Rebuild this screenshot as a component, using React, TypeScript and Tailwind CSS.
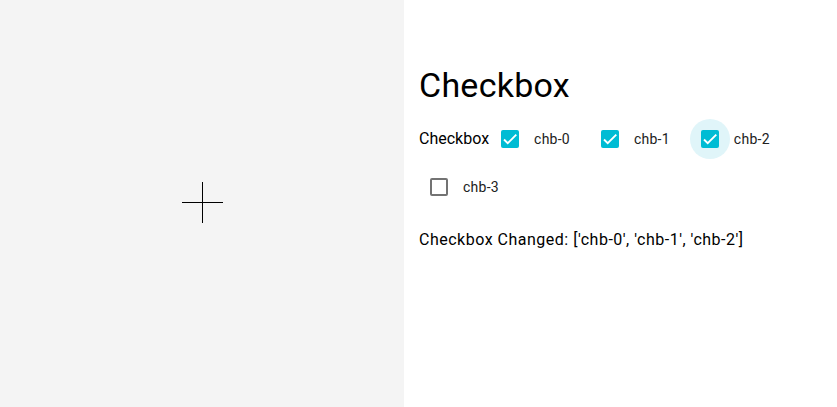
import { useState } from "react";

const items = ["chb-0", "chb-1", "chb-2", "chb-3"];

function Check({
  label,
  checked,
  hovered,
  onToggle,
}: {
  label: string;
  checked: boolean;
  hovered?: boolean;
  onToggle: () => void;
}) {
  return (
    <label className="mr-5 inline-flex cursor-pointer items-center">
      <span
        className={`flex h-10 w-10 items-center justify-center rounded-full ${
          hovered ? "bg-[#e0f5f9]" : ""
        }`}
        onClick={onToggle}
      >
        {checked ? (
          <span className="flex h-[18px] w-[18px] items-center justify-center rounded-[2px] bg-[#00bcd4]">
            <svg viewBox="0 0 24 24" className="h-[14px] w-[14px]">
              <path
                d="M1.73 12.91 8.1 19.28 22.79 4.59"
                fill="none"
                stroke="white"
                strokeWidth="3.2"
              />
            </svg>
          </span>
        ) : (
          <span className="h-[18px] w-[18px] rounded-[2px] border-2 border-[#737373]" />
        )}
      </span>
      <span className="pl-1 text-sm tracking-[0.25px] text-[#212121]">{label}</span>
    </label>
  );
}

export default function App() {
  const [checked, setChecked] = useState<string[]>(["chb-0", "chb-1", "chb-2"]);

  const toggle = (name: string) =>
    setChecked((prev) =>
      prev.includes(name) ? prev.filter((n) => n !== name) : items.filter((i) => i === name || prev.includes(i))
    );

  return (
    <div className="flex h-[407px] w-full font-['Roboto',sans-serif] text-black">
      <div className="flex w-[404px] shrink-0 items-center justify-center bg-[#f4f4f4] pb-[2px]">
        <svg width="41" height="41" viewBox="0 0 41 41">
          <line x1="0" y1="20.5" x2="41" y2="20.5" stroke="black" strokeWidth="1" />
          <line x1="20.5" y1="0" x2="20.5" y2="41" stroke="black" strokeWidth="1" />
        </svg>
      </div>
      <div className="flex-1 bg-white px-[15px] pt-[65px]">
        <h1 className="text-[34px] leading-[40px] tracking-[0.25px]">Checkbox</h1>
        <div className="mt-[14px] flex flex-wrap items-center gap-y-2">
          <span className="mr-px text-base">Checkbox</span>
          {items.map((name) => (
            <Check
              key={name}
              label={name}
              checked={checked.includes(name)}
              hovered={name === "chb-2"}
              onToggle={() => toggle(name)}
            />
          ))}
        </div>
        <p className="mt-[21px] text-base leading-6 tracking-[0.5px]">
          Checkbox Changed: [{checked.map((c) => `'${c}'`).join(", ")}]
        </p>
      </div>
    </div>
  );
}
